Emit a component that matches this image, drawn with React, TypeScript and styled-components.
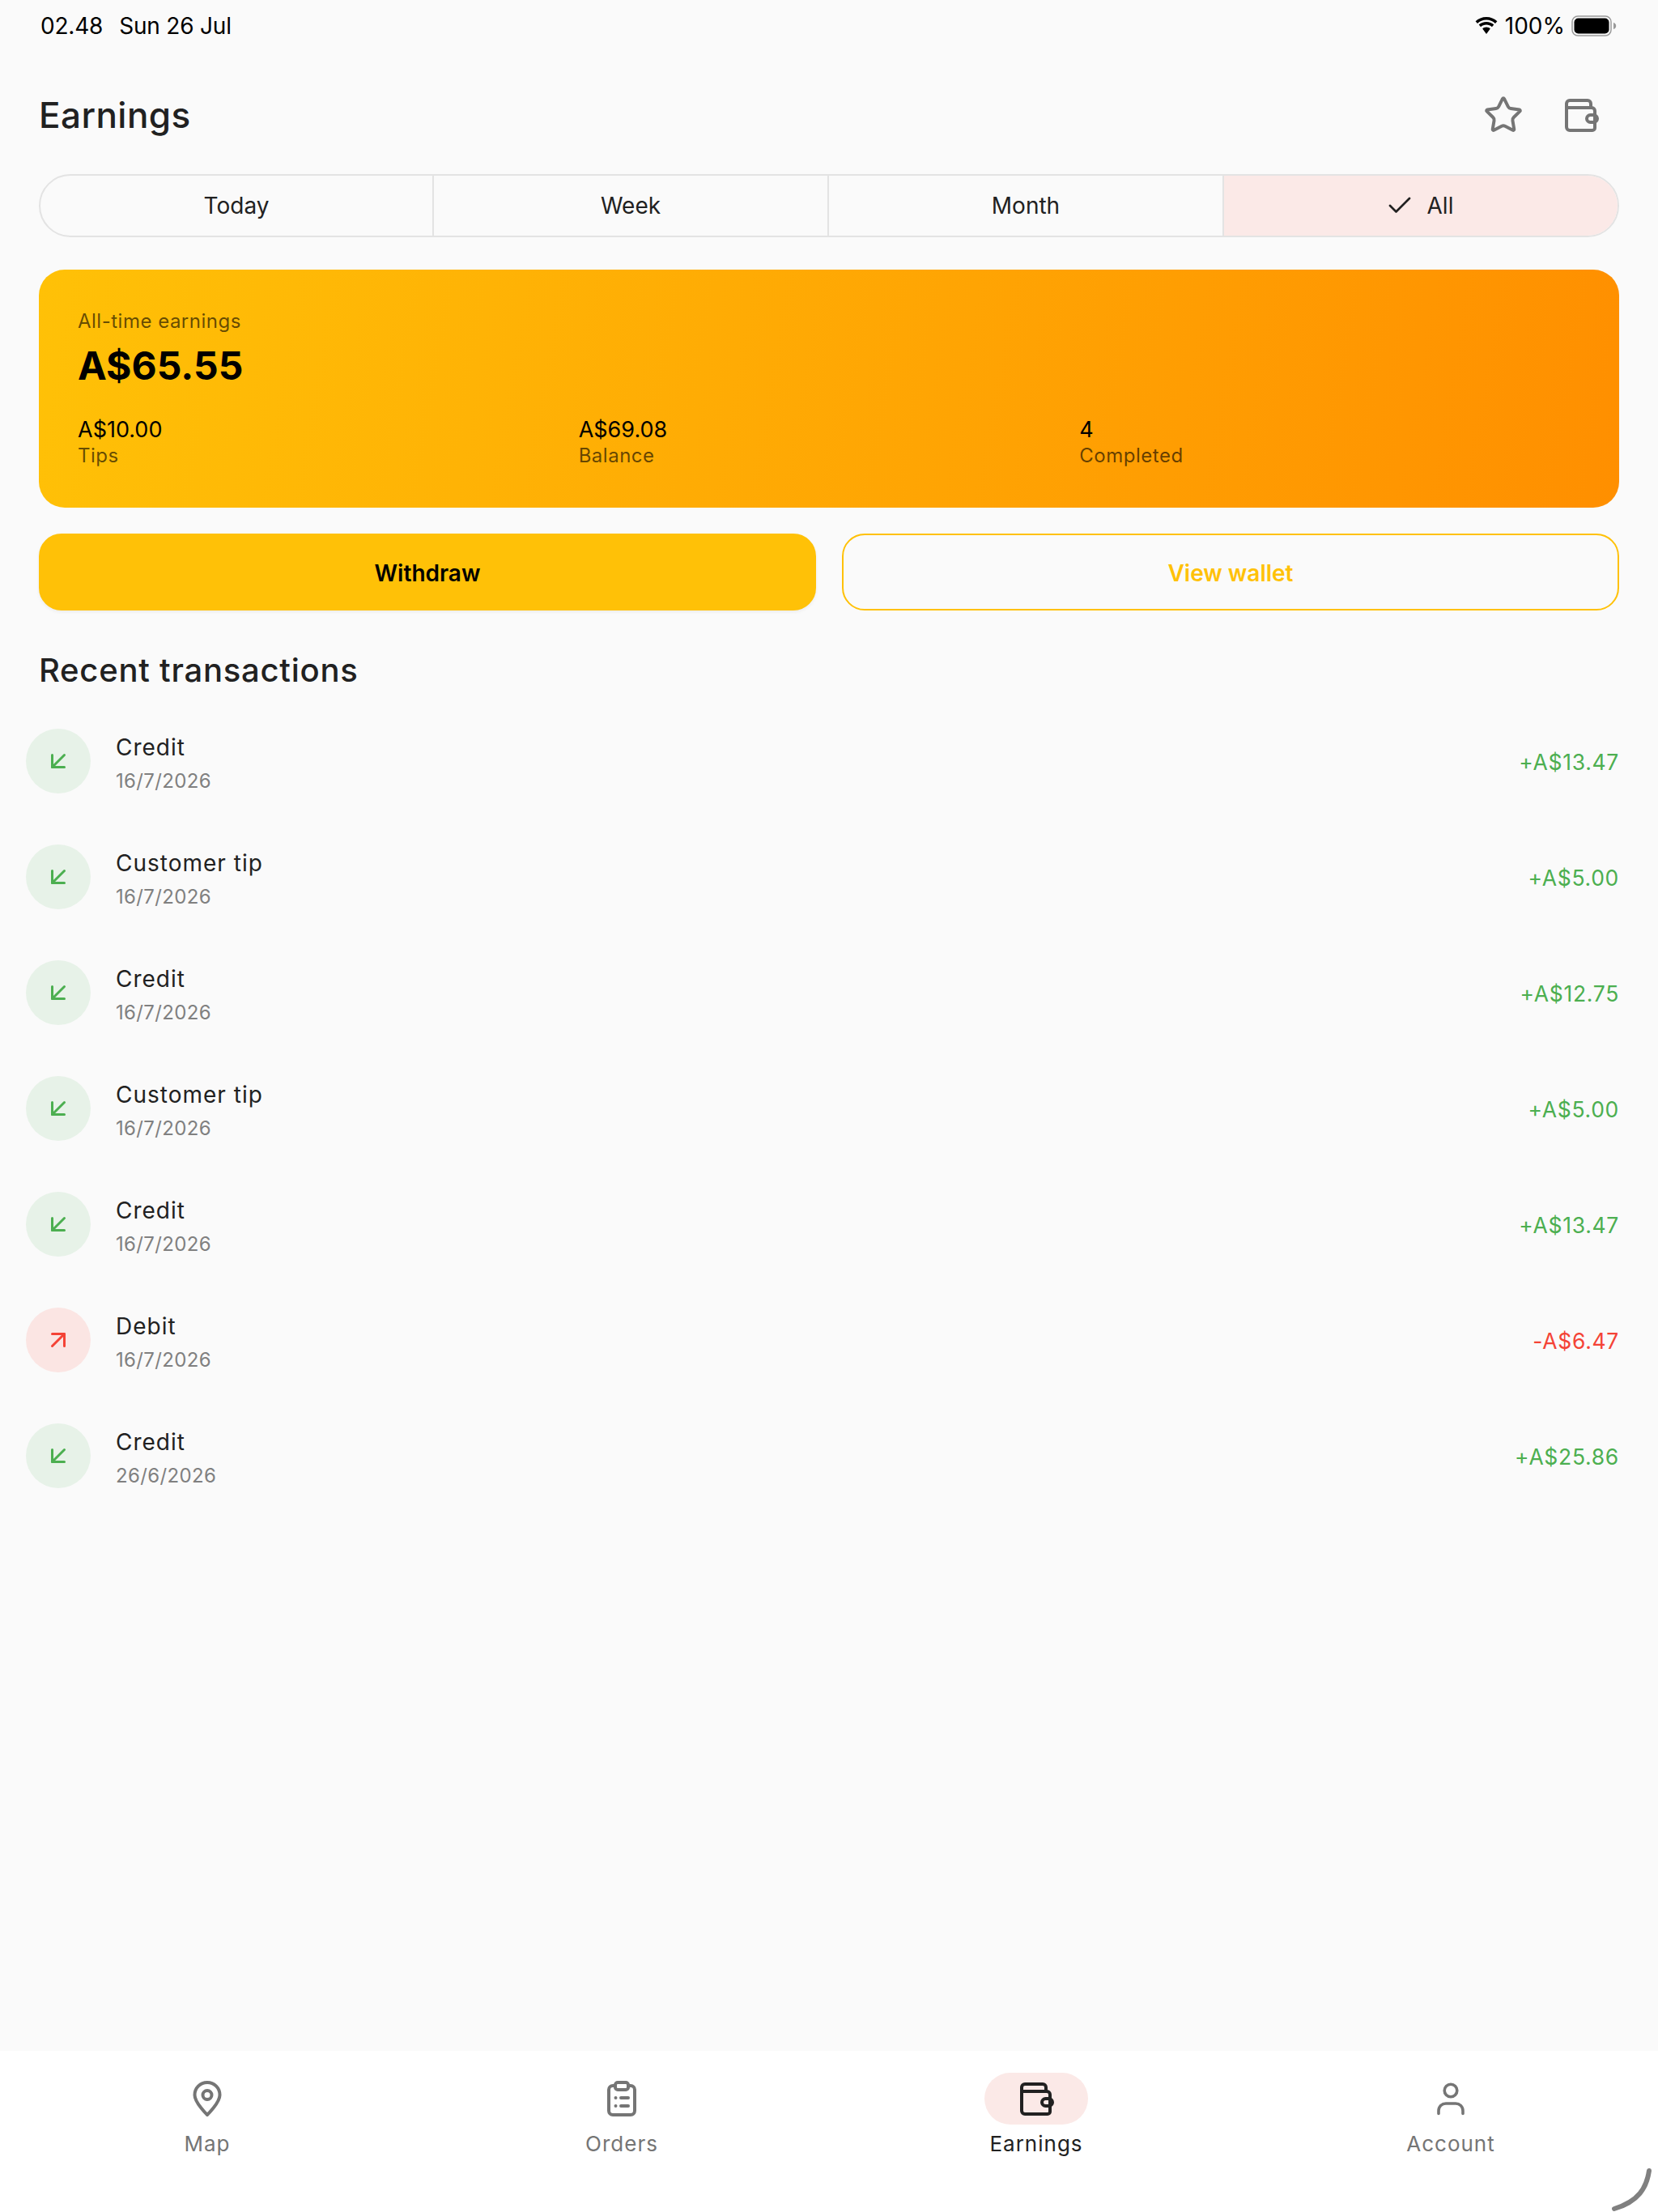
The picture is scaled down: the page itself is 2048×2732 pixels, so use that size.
import React from "react";
import styled, { createGlobalStyle } from "styled-components";
import { Check, Star, ArrowDownLeft, ArrowUpRight } from "lucide-react";

const GlobalStyle = createGlobalStyle`
  body {
    margin: 0;
    background: #fafafa;
    font-family: Inter, "Liberation Sans", sans-serif;
    color: #212121;
  }
`;

const Page = styled.div`
  display: flex;
  flex-direction: column;
  position: relative;
  height: 2732px;
  overflow: hidden;
  background: #fafafa;
`;

const StatusBar = styled.div`
  display: flex;
  align-items: center;
  justify-content: space-between;
  height: 64px;
  padding: 0 51px 0 50px;
  font-size: 28px;
  color: #000;
`;

const StatusGroup = styled.div<{ $gap: number; $tight?: boolean }>`
  display: flex;
  align-items: center;
  gap: ${(p) => p.$gap}px;
  letter-spacing: ${(p) => (p.$tight ? "-0.2px" : "0")};
`;

const Main = styled.main`
  display: flex;
  flex-direction: column;
  flex: 1;
  padding: 0 48px;
`;

const Header = styled.header`
  display: flex;
  align-items: center;
  justify-content: space-between;
  height: 100px;
  margin: 28px 0 23px;
`;

const Title = styled.h1`
  margin: 0;
  font-size: 44px;
  font-weight: 500;
  letter-spacing: 0.45px;
`;

const HeaderActions = styled.div`
  display: flex;
  align-items: center;
  gap: 49px;
  padding-right: 25px;
  color: #757575;
`;

const Tabs = styled.div`
  display: grid;
  grid-template-columns: 486px 488px 488px 486px;
  height: 78px;
  box-sizing: border-box;
  border: 2px solid #e3e3e3;
  border-radius: 39px;
  overflow: hidden;
`;

const Tab = styled.div<{ $active?: boolean }>`
  display: flex;
  align-items: center;
  justify-content: center;
  gap: 16px;
  padding-right: ${(p) => (p.$active ? "4px" : "0")};
  font-size: 28px;
  background: ${(p) => (p.$active ? "#fbe9e7" : "transparent")};
  border-right: ${(p) => (p.$active ? "none" : "2px solid #e3e3e3")};
`;

const EarningsCard = styled.section`
  margin-top: 40px;
  height: 294px;
  box-sizing: border-box;
  padding: 49px 48px 0;
  border-radius: 32px;
  background: linear-gradient(100deg, #ffc107 0%, #ff8f00 100%);
`;

const CardLabel = styled.div`
  font-size: 24px;
  line-height: 30px;
  letter-spacing: 0.5px;
  color: rgba(0, 0, 0, 0.62);
`;

const CardAmount = styled.div`
  margin-top: 8px;
  font-size: 48px;
  line-height: 64px;
  font-weight: 700;
  color: #000;
`;

const Stats = styled.div`
  display: grid;
  grid-template-columns: repeat(3, 1fr);
  margin-top: 30px;
`;

const StatValue = styled.div`
  font-size: 27px;
  line-height: 33px;
  color: #000;
`;

const StatLabel = styled.div`
  font-size: 24px;
  line-height: 32px;
  letter-spacing: 0.5px;
  color: rgba(0, 0, 0, 0.62);
`;

const Buttons = styled.div`
  display: grid;
  grid-template-columns: 1fr 1fr;
  gap: 32px;
  margin-top: 32px;
`;

const ActionButton = styled.button<{ $filled?: boolean }>`
  height: 95px;
  padding: 2px 0 0;
  border: 2px solid #ffc107;
  border-radius: 28px;
  background: ${(p) => (p.$filled ? "#ffc107" : "transparent")};
  color: ${(p) => (p.$filled ? "#000" : "#ffc107")};
  box-shadow: ${(p) => (p.$filled ? "0 2px 4px rgba(0, 0, 0, 0.06)" : "none")};
  font-family: inherit;
  font-size: 28px;
  font-weight: 600;
`;

const SectionTitle = styled.h2`
  margin: 44px 0 10px;
  height: 60px;
  line-height: 60px;
  font-size: 40px;
  font-weight: 500;
  letter-spacing: 0.75px;
`;

const Row = styled.div`
  display: flex;
  align-items: center;
  height: 143px;
  margin-left: -16px;
`;

const RowIcon = styled.div<{ $debit?: boolean }>`
  display: flex;
  align-items: center;
  justify-content: center;
  width: 80px;
  height: 80px;
  border-radius: 50%;
  background: ${(p) => (p.$debit ? "#fbe5e3" : "#e7f2e8")};
  color: ${(p) => (p.$debit ? "#f44336" : "#4caf50")};
`;

const RowText = styled.div`
  flex: 1;
  margin-left: 31px;
  padding-top: 8px;
`;

const RowTitle = styled.div`
  font-size: 28px;
  line-height: 40px;
  letter-spacing: 1px;
`;

const RowDate = styled.div`
  margin-top: 2px;
  font-size: 24px;
  line-height: 40px;
  letter-spacing: 0.35px;
  color: #808080;
`;

const RowAmount = styled.div<{ $debit?: boolean }>`
  padding-top: 2px;
  font-size: 26.5px;
  letter-spacing: 0.7px;
  color: ${(p) => (p.$debit ? "#f44336" : "#4caf50")};
`;

const Nav = styled.nav`
  display: grid;
  grid-template-columns: repeat(4, 1fr);
  height: 199px;
  background: #fff;
`;

const NavItem = styled.div<{ $active?: boolean }>`
  display: flex;
  flex-direction: column;
  align-items: center;
  padding-top: 27px;
  color: ${(p) => (p.$active ? "#212121" : "#757575")};
`;

const NavIconWrap = styled.div<{ $active?: boolean }>`
  display: flex;
  align-items: center;
  justify-content: center;
  width: 128px;
  height: 64px;
  border-radius: 32px;
  background: ${(p) => (p.$active ? "#fbe9e7" : "transparent")};
`;

const NavLabel = styled.div`
  margin-top: 6px;
  font-size: 26px;
  line-height: 36px;
  letter-spacing: 1px;
`;

const HomeCorner = styled.svg`
  position: absolute;
  right: 0;
  bottom: 0;
`;

function WalletIcon({ size = 44 }: { size?: number }) {
  return (
    <svg width={size} height={size} viewBox="0 0 44 44" fill="none" stroke="currentColor" strokeWidth="4" strokeLinecap="round" strokeLinejoin="round">
      <path d="M4 13V8a4 4 0 0 1 4-4h22a4 4 0 0 1 4 4v5" />
      <path d="M4 13h31a4 4 0 0 1 4 4v21a3 3 0 0 1-3 3H8a4 4 0 0 1-4-4V13z" />
      <rect x="29" y="22" width="13" height="9" rx="4.5" />
    </svg>
  );
}

function PinIcon() {
  return (
    <svg width="48" height="48" viewBox="0 0 48 48" fill="none" stroke="currentColor" strokeWidth="4" strokeLinejoin="round">
      <path d="M24 44C24 44 8.5 29 8.5 19.5 8.5 10.5 15.5 4 24 4s15.500 6.500 15.500 15.500C39.500 29 24 44 24 44z" />
      <circle cx="24" cy="19.500" r="5.500" />
    </svg>
  );
}

function ClipboardIcon() {
  return (
    <svg width="48" height="48" viewBox="0 0 48 48" fill="none" stroke="currentColor" strokeWidth="4" strokeLinecap="round" strokeLinejoin="round">
      <path d="M16 8h-3a5 5 0 0 0-5 5v26a5 5 0 0 0 5 5h22a5 5 0 0 0 5-5V13a5 5 0 0 0-5-5h-3" />
      <rect x="16" y="4" width="16" height="9" rx="3" />
      <path d="M16.500 23h.01M23 23h9M16.500 33h.01M23 33h9" />
    </svg>
  );
}

function PersonIcon() {
  return (
    <svg width="48" height="48" viewBox="0 0 48 48" fill="none" stroke="currentColor" strokeWidth="3.600" strokeLinecap="round">
      <circle cx="24" cy="14" r="7.800" />
      <path d="M9 42.500v-3.500c0-5.500 4-9 9-9h12c5 0 9 3.500 9 9v3.500" />
    </svg>
  );
}

function WifiIcon() {
  return (
    <svg width="30" height="22" viewBox="0 0 30 22" fill="#000">
      <path d="M15 3.500c4.300 0 8.100 1.700 11 4.400l2.400-2.600C24.900 2 20.200 0 15 0S5.100 2 1.600 5.300L4 7.900c2.900-2.700 6.700-4.400 11-4.400z" />
      <path d="M15 9.500c2.700 0 5.100 1 6.900 2.700l2.400-2.600C21.900 7.300 18.600 6 15 6s-6.900 1.300-9.300 3.600l2.400 2.600C9.900 10.500 12.300 9.500 15 9.500z" />
      <path d="M15 12.500c-1.900 0-3.600.7-4.800 1.900L15 21l4.800-6.600c-1.200-1.200-2.900-1.900-4.800-1.900z" />
    </svg>
  );
}

function BatteryIcon() {
  return (
    <svg width="56" height="26" viewBox="0 0 56 26">
      <rect x="1" y="1" width="48" height="24" rx="7" fill="none" stroke="#9a9a9a" strokeWidth="1.500" />
      <rect x="3.500" y="3.500" width="43" height="19" rx="5" fill="#000" />
      <path d="M52 9c2 .5 3.200 2 3.200 4s-1.200 3.500-3.200 4z" fill="#9a9a9a" />
    </svg>
  );
}

const tabs = ["Today", "Week", "Month", "All"];

const stats = [
  { value: "A$10.00", label: "Tips" },
  { value: "A$69.08", label: "Balance" },
  { value: "4", label: "Completed" },
];

const transactions = [
  { title: "Credit", date: "16/7/2026", amount: "+A$13.47" },
  { title: "Customer tip", date: "16/7/2026", amount: "+A$5.00" },
  { title: "Credit", date: "16/7/2026", amount: "+A$12.75" },
  { title: "Customer tip", date: "16/7/2026", amount: "+A$5.00" },
  { title: "Credit", date: "16/7/2026", amount: "+A$13.47" },
  { title: "Debit", date: "16/7/2026", amount: "-A$6.47", debit: true },
  { title: "Credit", date: "26/6/2026", amount: "+A$25.86" },
];

const navItems = [
  { label: "Map", icon: <PinIcon /> },
  { label: "Orders", icon: <ClipboardIcon /> },
  { label: "Earnings", icon: <WalletIcon />, active: true },
  { label: "Account", icon: <PersonIcon /> },
];

export default function App() {
  return (
    <Page>
      <GlobalStyle />
      <StatusBar>
        <StatusGroup $gap={20} $tight>
          <span>02.48</span>
          <span>Sun 26 Jul</span>
        </StatusGroup>
        <StatusGroup $gap={8}>
          <WifiIcon />
          <span>100%</span>
          <BatteryIcon />
        </StatusGroup>
      </StatusBar>

      <Main>
        <Header>
          <Title>Earnings</Title>
          <HeaderActions>
            <Star size={50} strokeWidth={1.9} />
            <WalletIcon />
          </HeaderActions>
        </Header>

        <Tabs>
          {tabs.map((tab) => (
            <Tab key={tab} $active={tab === "All"}>
              {tab === "All" && <Check size={36} strokeWidth={1.8} />}
              {tab}
            </Tab>
          ))}
        </Tabs>

        <EarningsCard>
          <CardLabel>All-time earnings</CardLabel>
          <CardAmount>A$65.55</CardAmount>
          <Stats>
            {stats.map((s) => (
              <div key={s.label}>
                <StatValue>{s.value}</StatValue>
                <StatLabel>{s.label}</StatLabel>
              </div>
            ))}
          </Stats>
        </EarningsCard>

        <Buttons>
          <ActionButton $filled>Withdraw</ActionButton>
          <ActionButton>View wallet</ActionButton>
        </Buttons>

        <SectionTitle>Recent transactions</SectionTitle>

        {transactions.map((t, i) => (
          <Row key={i}>
            <RowIcon $debit={t.debit}>
              {t.debit ? <ArrowUpRight size={36} strokeWidth={2} /> : <ArrowDownLeft size={36} strokeWidth={2} />}
            </RowIcon>
            <RowText>
              <RowTitle>{t.title}</RowTitle>
              <RowDate>{t.date}</RowDate>
            </RowText>
            <RowAmount $debit={t.debit}>{t.amount}</RowAmount>
          </Row>
        ))}
      </Main>

      <Nav>
        {navItems.map((item) => (
          <NavItem key={item.label} $active={item.active}>
            <NavIconWrap $active={item.active}>{item.icon}</NavIconWrap>
            <NavLabel>{item.label}</NavLabel>
          </NavItem>
        ))}
      </Nav>

      <HomeCorner width="60" height="60" viewBox="0 0 60 60" fill="none">
        <path d="M49 9C46 30 36 47 6 56" stroke="#808080" strokeWidth="6" strokeLinecap="round" />
      </HomeCorner>
    </Page>
  );
}
